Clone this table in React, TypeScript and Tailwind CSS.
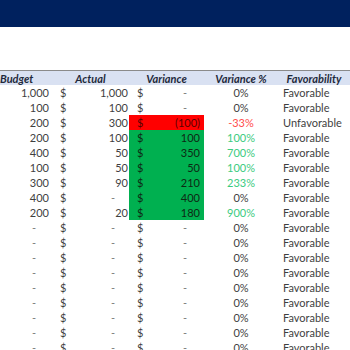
const rows = [
  { b: "1,000", a: "1,000", v: "-", p: "0%", f: "Favorable", tone: "none" },
  { b: "100", a: "100", v: "-", p: "0%", f: "Favorable", tone: "none" },
  { b: "200", a: "300", v: "(100)", p: "-33%", f: "Unfavorable", tone: "red" },
  { b: "200", a: "100", v: "100", p: "100%", f: "Favorable", tone: "green" },
  { b: "400", a: "50", v: "350", p: "700%", f: "Favorable", tone: "green" },
  { b: "100", a: "50", v: "50", p: "100%", f: "Favorable", tone: "green" },
  { b: "300", a: "90", v: "210", p: "233%", f: "Favorable", tone: "green" },
  { b: "400", a: "-", v: "400", p: "0%", f: "Favorable", tone: "green0" },
  { b: "200", a: "20", v: "180", p: "900%", f: "Favorable", tone: "green" },
  ...Array.from({ length: 9 }, () => ({ b: "-", a: "-", v: "-", p: "0%", f: "Favorable", tone: "none" })),
];

const Dash = ({ v }: { v: string }) =>
  v === "-" ? <span className="pr-[13px] text-[#7a7a7a]">-</span> : <span>{v}</span>;

export default function App() {
  return (
    <div className="w-[350px] h-[350px] overflow-hidden bg-white text-[11px] leading-[15px] text-[#3f3f3f]" style={{ fontFamily: "Lato, 'Liberation Sans', sans-serif" }}>
      <div className="h-[27px] bg-[#00215e]" />
      <div className="h-[43px]" />
      <div className="flex h-[15px] border-t border-[#8a8a8a] bg-[#d9e1f2] font-bold italic text-[#1f2a3c]">
        <div className="w-[52px] text-left">Budget</div>
        <div className="w-[77px] text-center">Actual</div>
        <div className="w-[75px] text-center">Variance</div>
        <div className="w-[74px] text-center">Variance %</div>
        <div className="w-[72px] text-center">Favorability</div>
      </div>
      {rows.map((r, i) => {
        const cell =
          r.tone === "red"
            ? "bg-[#ff0000] text-[#5a0000]"
            : r.tone === "none"
            ? ""
            : "bg-[#00b050] text-[#0d2a14]";
        const pct =
          r.tone === "red" ? "text-[#ff4d4d]" : r.tone === "green" ? "text-[#3ccb7f]" : "";
        return (
          <div key={i} className="flex h-[15px]">
            <div className="w-[52px] pr-[3px] text-right"><Dash v={r.b} /></div>
            <div className="flex w-[77px] justify-between pl-[8px] pr-[1px]">
              <span>$</span>
              <Dash v={r.a} />
            </div>
            <div className={"flex w-[75px] justify-between pl-[8px] pr-[4px] " + cell}>
              <span>$</span>
              <Dash v={r.v} />
            </div>
            <div className={"w-[74px] text-center " + pct}>{r.p}</div>
            <div className="w-[72px] pl-[5px]">{r.f}</div>
          </div>
        );
      })}
    </div>
  );
}
